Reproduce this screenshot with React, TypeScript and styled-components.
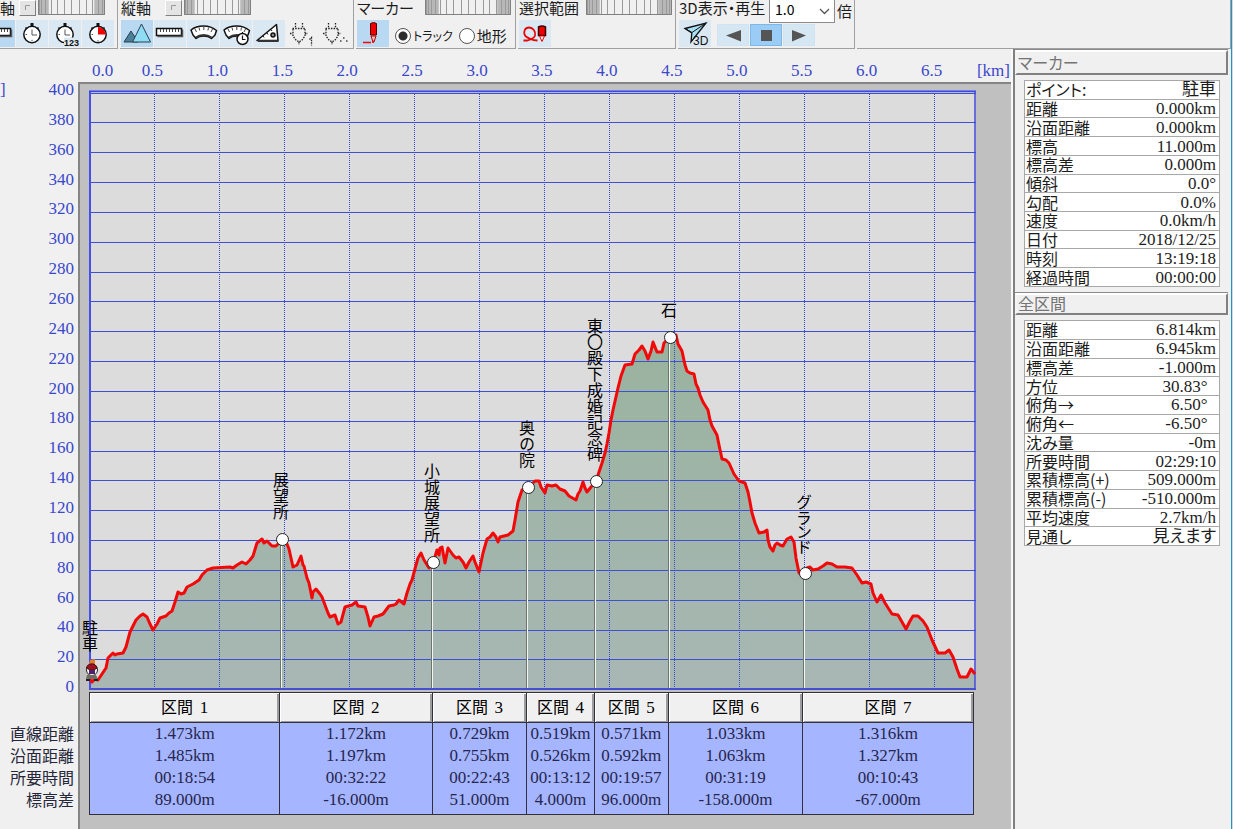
import React from "react";
import styled, { createGlobalStyle } from "styled-components";

const UI_FONT = `"Noto Sans CJK JP", "Liberation Sans", sans-serif`;
const NUM_FONT = `"Liberation Serif", "Noto Sans CJK JP", serif`;
const BLUE = "#3a48cc";

const GlobalStyle = createGlobalStyle`
  *, *::before, *::after { box-sizing: border-box; }
  html, body { margin: 0; background: #f0f0f0; }
  body { font-family: ${UI_FONT}; font-size: 16px; font-feature-settings: "palt"; color: #1c1c1c; overflow-x: hidden; }
  button, select, input { font: inherit; margin: 0; padding: 0; }
`;

const Desktop = styled.div`
  min-height: 100vh;
  display: flex;
  padding-right: 1px;
  background: #cfdbe3;
`;

const Window = styled.div`
  flex: 1;
  min-width: 0;
  display: flex;
  flex-direction: column;
  background: #f0f0f0;
  border-right: 1px solid #2a8fbd;
`;

/* ---------- toolbar ---------- */

const Toolbar = styled.header`
  display: flex;
  gap: 2px;
  height: 49px;
  overflow: hidden;
`;

const Group = styled.section<{ $w?: number }>`
  flex: ${(p) => (p.$w ? `0 0 ${p.$w}px` : "1 1 0")};
  border-right: 1px solid #a0a0a0;
  border-bottom: 1px solid #a0a0a0;
  overflow: hidden;
`;

const TopRow = styled.div<{ $end?: boolean }>`
  display: flex;
  justify-content: ${(p) => (p.$end ? "flex-end" : "flex-start")};
  align-items: flex-start;
  gap: 2px;
  height: 20px;
  padding: 0 ${(p) => (p.$end ? 12 : 1)}px 0 ${(p) => (p.$end ? 0 : 1)}px;
`;

const Caption = styled.span<{ $w?: number }>`
  min-width: ${(p) => p.$w || 0}px;
  font-size: 15px;
  line-height: 15px;
  white-space: nowrap;
`;

const Unit = styled.span`
  font-size: 15px;
  line-height: 22px;
`;

const ToolRow = styled.div<{ $end?: boolean }>`
  display: flex;
  justify-content: ${(p) => (p.$end ? "flex-end" : "flex-start")};
  align-items: center;
  gap: 1px;
  height: 27px;
  padding: 0 ${(p) => (p.$end ? 3 : 0)}px 0 1px;
`;

const ToolButton = styled.button<{ $on?: boolean }>`
  flex: none;
  width: 32px;
  height: 27px;
  border: 0;
  background: ${(p) => (p.$on ? "#b9d9f3" : "#dae8f4")};
  &:disabled { background: transparent; }
  svg { display: block; }
`;

const Player = styled.div`
  display: flex;
  gap: 1px;
  margin: 3px 0 0 5px;
`;

const PlayButton = styled.button<{ $on?: boolean }>`
  width: 32px;
  height: 22px;
  border: 1px solid ${(p) => (p.$on ? "#7db8e8" : "#cfe3f3")};
  background: ${(p) => (p.$on ? "#9accf5" : "#d6e7f4")};
  svg { display: block; }
`;

const ResetButton = styled.button`
  width: 17px;
  height: 16px;
  border: 1px solid;
  border-color: #ffffff #808080 #808080 #ffffff;
  background: #e4e4e4;
  svg { display: block; }
`;

const WheelButton = styled.button<{ $w: number }>`
  width: ${(p) => p.$w}px;
  height: 15px;
  border: 0;
  svg { display: block; }
`;

const SpeedBox = styled.div`
  position: relative;
  width: 66px;
  svg { position: absolute; right: 5px; top: 8px; pointer-events: none; }
`;

const SpeedSelect = styled.select`
  display: block;
  appearance: none;
  width: 100%;
  height: 23px;
  padding: 0 0 4px 5px;
  border: 1px solid #8c8c8c;
  border-top: 0;
  border-radius: 0;
  background: #ffffff;
  font-size: 14px;
  line-height: 18px;
`;

const RadioLabel = styled.label`
  display: flex;
  align-items: center;
  gap: 2px;
  margin: 4px 0 0 5px;
  font-size: 15px;
  line-height: 20px;
  white-space: nowrap;
`;

const KanaText = styled.span`
  font-size: 12px;
`;

const Radio = styled.input`
  appearance: none;
  width: 16px;
  height: 16px;
  border: 1px solid #555555;
  border-radius: 50%;
  background: #ffffff;
  &:checked { background: radial-gradient(circle, #2c2c2c 0 4px, #ffffff 5px); }
`;

/* ---------- main area ---------- */

const Main = styled.main`
  flex: 1;
  display: flex;
`;

const ChartPane = styled.div`
  flex: 1;
  min-width: 0;
  display: flex;
  flex-direction: column;
  border-right: 2px solid #f8f8f8;
`;

const XAxis = styled.div`
  display: flex;
  height: 33px;
  padding: 10px 1px 0 92px;
  color: ${BLUE};
  font-family: ${NUM_FONT};
  font-size: 17px;
  line-height: 24px;
`;

const FirstTick = styled.span`
  flex: 0 0 28px;
`;

const Tick = styled.span`
  flex: 1;
  text-align: center;
`;

const AxisUnit = styled.span`
  flex: 0 0 46px;
  text-align: right;
`;

const ChartBody = styled.div`
  flex: 1;
  background:
    linear-gradient(#858585, #858585) 78px 0 / 100% 2px no-repeat,
    linear-gradient(to right, #f0f0f0 78px, #858585 78px 80px, #c0c0c0 80px);
`;

const PlotRow = styled.div`
  display: flex;
  align-items: flex-start;
  height: 610px;
`;

const YAxis = styled.div`
  flex: 0 0 78px;
  display: flex;
  flex-direction: column;
  height: 627px;
  margin-top: -7px;
  padding-right: 4px;
  color: ${BLUE};
  font-family: ${NUM_FONT};
  font-size: 17px;
`;

const YTick = styled.span`
  flex: 1;
  display: flex;
  align-items: center;
  justify-content: flex-end;
`;

const YUnit = styled.span`
  margin-right: auto;
`;

const Plot = styled.div`
  position: relative;
  flex: 1;
  height: 600px;
  margin: 8px 35px 0 11px;
`;

const PlotSvg = styled.svg`
  display: block;
  width: 100%;
  height: 100%;
`;

const Pin = styled.div`
  position: absolute;
  width: 13px;
  height: 13px;
  margin: -7px 0 0 -6px;
`;

const PinDot = styled.span`
  display: block;
  width: 13px;
  height: 13px;
  border: 1px solid #222222;
  border-radius: 50%;
  background: #ffffff;
`;

const PinLabel = styled.span<{ $tight?: boolean }>`
  position: absolute;
  bottom: 26px;
  left: -3px;
  writing-mode: vertical-rl;
  font-feature-settings: "vpal" ${(p) => (p.$tight ? 1 : 0)};
  font-size: 16px;
  line-height: 16px;
  white-space: nowrap;
  color: #000000;
`;

const Hiker = styled.svg`
  position: absolute;
  left: -1px;
  top: -7px;
`;

/* ---------- section table ---------- */

const SectionTable = styled.table`
  display: grid;
  grid-template-columns: 89px 1473fr 1172fr 729fr 519fr 571fr 1033fr 1316fr;
  margin-right: 37px;
  font-family: ${NUM_FONT};
  font-size: 17px;
  line-height: 22px;
  color: #26264e;
  thead, tbody, tr { display: contents; }
`;

const Corner = styled.td`
  padding: 0;
`;

const SectionHead = styled.th`
  min-width: 0;
  height: 31px;
  padding: 0;
  border: 1px solid #33303c;
  border-left-width: 0;
  box-shadow: inset 1px 1px 0 #ffffff, inset -2px -1px 0 #9c9c9c;
  background: #f0f0f0;
  color: #000000;
  font-family: ${UI_FONT};
  font-size: 16px;
  font-weight: 400;
  line-height: 26px;
  &:nth-child(2) { border-left-width: 1px; }
`;

const SectionNum = styled.span`
  margin-left: 3px;
  font-family: ${NUM_FONT};
  font-size: 17px;
`;

const RowHead = styled.th`
  padding: 0 15px 0 0;
  color: #26263a;
  font-family: ${UI_FONT};
  font-size: 16px;
  font-weight: 400;
  line-height: 20px;
  text-align: right;
  white-space: nowrap;
`;

const SectionCell = styled.td<{ $last?: boolean }>`
  min-width: 0;
  padding: 0 0 ${(p) => (p.$last ? 3 : 0)}px;
  border-right: 1px solid #33303c;
  border-bottom: ${(p) => (p.$last ? "1px solid #33303c" : "0")};
  background: #a5b5ff;
  text-align: center;
  white-space: nowrap;
  &:nth-child(2) { border-left: 1px solid #33303c; }
`;

/* ---------- sidebar ---------- */

const Sidebar = styled.aside`
  flex: 0 0 218px;
  padding: 1px 3px 0 0;
  border-left: 2px solid #808080;
`;

const PanelTitle = styled.h2<{ $h: number }>`
  height: ${(p) => p.$h}px;
  margin: 0;
  padding-left: 1px;
  border: 2px solid;
  border-color: #ffffff #808080 #808080 #f4f4f4;
  box-shadow: 0 -1px 0 #8a8a8a;
  color: #747474;
  font-size: 16px;
  font-weight: 400;
  line-height: ${(p) => p.$h - 5}px;
`;

const InfoTable = styled.table<{ $h: number }>`
  width: calc(100% - 17px);
  height: ${(p) => p.$h}px;
  margin: 5px 8px 6px 9px;
  border-collapse: collapse;
  background: #ffffff;
  tr { border: 1px solid #a8a8a8; }
  th, td { padding: 0 3px 0 1px; line-height: 17px; white-space: nowrap; }
  th { font-size: 16px; font-weight: 400; text-align: left; }
  td { font-family: ${NUM_FONT}; font-size: 17px; text-align: right; }
`;

/* ---------- data ---------- */

const PROFILE: [number, number][] = [
  [89, 678], [92, 682], [95, 679], [98, 680], [102, 674], [106, 668], [108, 658], [113, 653], [115, 655], [117, 654], [123, 653], [126, 647],
  [130, 632], [132, 628], [136, 620], [140, 616], [143, 614], [147, 617], [150, 624], [153, 630], [157, 624], [160, 618], [166, 616], [169, 613], [172, 611],
  [175, 602], [178, 592], [181, 594], [184, 593], [187, 587], [193, 584], [199, 580], [202, 575], [207, 570], [213, 568],
  [230, 567], [233, 568], [237, 565], [242, 562], [246, 564], [250, 560], [253, 556], [257, 543], [262, 539], [264, 543], [267, 541], [272, 546], [276, 546],
  [279, 543], [282, 540], [287, 544], [289, 549], [293, 567], [297, 565], [301, 556], [303, 565], [304, 566], [307, 578], [309, 583], [312, 598],
  [313, 592], [316, 589], [320, 594], [322, 597], [325, 605], [328, 613], [330, 617], [335, 615], [338, 624], [341, 622], [345, 607],
  [352, 605], [356, 602], [358, 606], [365, 607], [368, 617], [370, 626], [374, 617], [378, 616], [383, 614], [389, 606], [394, 605], [396, 604], [399, 600],
  [404, 604], [407, 593], [410, 584], [412, 580], [416, 565], [418, 558], [421, 553], [424, 560], [429, 568], [433, 563], [437, 550], [439, 555],
  [440, 548], [442, 547], [445, 563], [448, 548], [453, 555], [456, 558], [459, 557], [463, 562], [466, 568], [469, 562], [473, 556], [475, 562], [479, 572],
  [483, 553], [487, 539], [490, 537], [493, 533], [496, 537], [498, 542], [500, 537], [508, 535], [513, 531], [515, 520], [518, 502], [522, 490],
  [528, 488], [532, 484], [535, 481], [539, 481], [541, 487], [545, 493], [547, 485], [552, 486], [556, 485], [560, 489], [565, 491], [569, 496],
  [576, 500], [578, 494], [580, 491], [583, 482], [585, 488], [587, 492], [591, 487], [596, 482], [599, 472], [602, 463], [605, 453], [607, 444], [609, 433], [611, 420], [613, 410],
  [618, 388], [621, 376], [625, 365], [632, 364], [635, 354], [639, 350], [642, 346], [645, 351], [648, 359], [651, 351], [653, 342], [657, 352], [662, 352],
  [664, 343], [669, 338], [676, 335], [678, 344], [682, 351], [685, 365], [687, 371], [690, 373], [694, 374], [696, 384], [698, 388], [700, 395], [703, 402], [708, 410],
  [710, 420], [712, 426], [717, 435], [719, 445], [722, 459], [726, 460], [729, 463], [734, 474], [739, 481], [745, 483], [748, 492], [750, 502], [752, 513], [755, 523],
  [759, 533], [764, 532], [767, 530], [768, 540], [770, 547], [773, 551], [775, 545], [777, 543], [780, 545], [783, 546], [787, 539], [791, 537], [794, 542],
  [796, 558], [799, 573], [805, 574], [807, 568], [810, 567], [813, 570], [818, 569], [823, 566], [827, 563], [832, 564], [837, 567], [845, 567], [852, 568], [857, 575],
  [862, 583], [866, 582], [871, 584], [873, 593], [877, 602], [881, 595], [885, 603], [892, 614], [898, 615], [902, 622], [906, 629], [910, 621],
  [913, 616], [918, 616], [923, 621], [927, 627], [932, 640], [938, 653], [945, 653], [949, 650], [953, 657], [957, 669], [960, 677], [967, 677], [971, 669], [975, 674],
];

const PLOT = { x: 89, y: 90, w: 887, h: 600 };
const KM = 130;

const PINS = [
  { x: 282, y: 540, label: "展望所" },
  { x: 433, y: 563, label: "小城展望所" },
  { x: 528, y: 488, label: "奥の院" },
  { x: 596, y: 482, label: "東〇殿下成婚記念碑" },
  { x: 670, y: 338, label: "石" },
  { x: 805, y: 574, label: "グランド", tight: true },
];

const SECTIONS: [string, string[]][] = [
  ["直線距離", ["1.473km", "1.172km", "0.729km", "0.519km", "0.571km", "1.033km", "1.316km"]],
  ["沿面距離", ["1.485km", "1.197km", "0.755km", "0.526km", "0.592km", "1.063km", "1.327km"]],
  ["所要時間", ["00:18:54", "00:32:22", "00:22:43", "00:13:12", "00:19:57", "00:31:19", "00:10:43"]],
  ["標高差", ["89.000m", "-16.000m", "51.000m", "4.000m", "96.000m", "-158.000m", "-67.000m"]],
];

const MARKER_INFO = [
  ["ポイント:", "駐車"], ["距離", "0.000km"], ["沿面距離", "0.000km"], ["標高", "11.000m"],
  ["標高差", "0.000m"], ["傾斜", "0.0°"], ["勾配", "0.0%"], ["速度", "0.0km/h"],
  ["日付", "2018/12/25"], ["時刻", "13:19:18"], ["経過時間", "00:00:00"],
];

const TOTAL_INFO = [
  ["距離", "6.814km"], ["沿面距離", "6.945km"], ["標高差", "-1.000m"], ["方位", "30.83°\u00a0\u00a0"],
  ["俯角→", "6.50°\u00a0\u00a0"], ["俯角←", "-6.50°\u00a0\u00a0"], ["沈み量", "-0m"], ["所要時間", "02:29:10"],
  ["累積標高(+)", "509.000m"], ["累積標高(-)", "-510.000m"], ["平均速度", "2.7km/h"], ["見通し", "見えます"],
];

/* ---------- icons ---------- */

const Icon = ({ children }: { children: React.ReactNode }) => (
  <svg width="32" height="27" viewBox="0 0 32 27" fill="none" stroke="#111" strokeWidth="1.5">{children}</svg>
);

const ClockFace = ({ pie }: { pie?: boolean }) => (
  <>
    <circle cx="16" cy="14.5" r="8.2" fill="#fff" />
    {pie && <path d="M16 14.5V7a7.5 7.5 0 0 1 7.5 7.5z" fill="#f00000" stroke="none" />}
    <path d="M14.5 4.5h3" strokeWidth="3" />
    <path d="M9.5 7.5l1.5 1.5M22.5 7.5L21 9" />
    <path d={pie ? "M16 20v1.5M9.5 14.5H11" : "M16 9.5v5.5h5M9.5 14.5H11M16 19.8v1.2"} stroke="#555" strokeWidth="1" />
  </>
);

const RulerIcon = () => (
  <Icon>
    <path d="M2.500 8.500h25v7h-25z" fill="#fff" />
    <path d="M3.500 16.500h25V9.500" stroke="#555" />
    <path d="M6.500 9v3M9.500 9v3M12.500 9v3M15.500 9v3M18.500 9v3M21.500 9v3M24.500 9v3" strokeWidth="1" stroke="#444" />
  </Icon>
);

const ArcShape = () => (
  <>
    <path d="M4 10C7 7.500 11 6 16.500 6S26 7.500 29.500 10.500L28 15l-3.500 3.500C20 15 13 15 9 18.500L6 15z" fill="#fff" strokeLinejoin="round" />
    <path d="M9 17.500C13 14 20 14 24.500 17.500" stroke="#333" strokeWidth="2" />
    <path d="M8 9l1.500 3M12 7.500l.7 3M16.800 7v3M21.500 7.500l-.6 3M25.500 9L24 12" strokeWidth="1" stroke="#444" />
  </>
);

const PlugShape = () => (
  <g strokeDasharray="1.500 1.200" strokeWidth="1.300" stroke="#222">
    <path d="M9.500 3v5M16.500 3v5M6.500 8.500h13M7 9v7l3 4 3 2 3-2 3-4V9M4 13.500h3M19 13.500h3M13 22v3" />
  </g>
);

const Wheel = ({ w, label }: { w: number; label: string }) => {
  const n = Math.round(w / 4.7);
  const lines = Array.from({ length: n - 1 }, (_, i) => (w / 2) * (1 - Math.cos((Math.PI * (i + 1)) / n)));
  return (
    <WheelButton $w={w} type="button" aria-label={label}>
      <svg width={w} height="15" viewBox={`0 0 ${w} 15`} preserveAspectRatio="none">
        <rect width={w} height="15" fill="#f0f0f0" />
        <rect width={w * 0.16} height="15" fill="#b8b8b8" />
        <rect x={w * 0.84} width={w * 0.16} height="15" fill="#b8b8b8" />
        {lines.map((x) => <path key={x} d={`M${Math.round(x) + 0.5} 0V15`} stroke="#9a9a9a" strokeWidth="1" />)}
        <path d={`M.5 0V14.500H${w - 0.5}V0`} fill="none" stroke="#808080" />
      </svg>
    </WheelButton>
  );
};

const Reset = ({ label }: { label: string }) => (
  <ResetButton type="button" aria-label={label}>
    <svg width="15" height="14" viewBox="0 0 15 14"><path d="M5.500 9V4.500H10" fill="none" stroke="#999" /></svg>
  </ResetButton>
);

/* ---------- parts ---------- */

const ToolbarView = () => (
  <Toolbar>
    <Group $w={118}>
      <TopRow $end>
        <Caption $w={17}>軸</Caption>
        <Reset label="横軸リセット" />
        <Wheel w={67} label="横軸" />
      </TopRow>
      <ToolRow $end>
        <ToolButton $on aria-label="距離"><RulerIcon /></ToolButton>
        <ToolButton aria-label="時間"><Icon><ClockFace /></Icon></ToolButton>
        <ToolButton aria-label="時刻">
          <Icon>
            <ClockFace />
            <path d="M15 17.500h17V27H15z" fill="#dae8f4" stroke="none" />
            <text x="15" y="26" fontSize="9" fontWeight="700" fontFamily="Liberation Sans" fill="#111" stroke="none">123</text>
          </Icon>
        </ToolButton>
        <ToolButton aria-label="経過"><Icon><ClockFace pie /></Icon></ToolButton>
      </ToolRow>
    </Group>

    <Group $w={234}>
      <TopRow>
        <Caption $w={42}>縦軸</Caption>
        <Reset label="縦軸リセット" />
        <Wheel w={67} label="縦軸" />
      </TopRow>
      <ToolRow>
        <ToolButton $on aria-label="標高">
          <Icon>
            <path d="M3 22l7-11 7 11z" fill="#4d7f99" stroke="#26404d" strokeWidth="1" />
            <path d="M11.500 22L20.500 4l9 18z" fill="#8fdcf5" stroke="#26404d" strokeWidth="1" />
          </Icon>
        </ToolButton>
        <ToolButton aria-label="沿面距離"><RulerIcon /></ToolButton>
        <ToolButton aria-label="速度"><Icon><ArcShape /></Icon></ToolButton>
        <ToolButton aria-label="平均速度">
          <Icon>
            <ArcShape />
            <circle cx="22.500" cy="19" r="5.500" fill="#fff" />
            <path d="M22.500 15.500v4h3M22.500 12v2" strokeWidth="1.200" />
          </Icon>
        </ToolButton>
        <ToolButton aria-label="傾斜">
          <Icon>
            <path d="M4 20.500L23.500 4.500l1.500 16z" fill="#fff" strokeLinejoin="round" />
            <path d="M5 21h20.500" stroke="#333" strokeWidth="2" />
            <circle cx="20" cy="15" r="2" fill="#888" />
            <path d="M10 16l1 1.500M14 13l1 1.500M18 9.500l1 1.500" strokeWidth="1" />
          </Icon>
        </ToolButton>
        <ToolButton disabled aria-label="センサー1">
          <Icon>
            <PlugShape />
            <path d="M23.500 19.500l2-2v8" stroke="#222" strokeWidth="1.300" strokeDasharray="1.500 1" />
          </Icon>
        </ToolButton>
        <ToolButton disabled aria-label="センサー">
          <Icon>
            <PlugShape />
            <path d="M21 21h1.500M24 18h1.500M27 21h1.500" stroke="#444" />
          </Icon>
        </ToolButton>
      </ToolRow>
    </Group>

    <Group $w={160}>
      <TopRow>
        <Caption $w={66}>マーカー</Caption>
        <Wheel w={86} label="マーカー" />
      </TopRow>
      <ToolRow>
        <ToolButton $on aria-label="マーカー表示">
          <Icon>
            <path d="M13.500 3.500q3-2 6 0v11.500h-6z" fill="#f00000" stroke="#5a0000" strokeWidth="1" />
            <path d="M14 16h5l-2 6h-1z" fill="#ffc0b0" stroke="#a00" strokeWidth="1" />
            <path d="M6 22.500h8M16 20.500v2.500" stroke="#f00" />
          </Icon>
        </ToolButton>
        <RadioLabel><Radio type="radio" name="marker" defaultChecked /><KanaText>トラック</KanaText></RadioLabel>
        <RadioLabel><Radio type="radio" name="marker" />地形</RadioLabel>
      </ToolRow>
    </Group>

    <Group $w={158}>
      <TopRow>
        <Caption $w={65}>選択範囲</Caption>
        <Wheel w={86} label="選択範囲" />
      </TopRow>
      <ToolRow>
        <ToolButton aria-label="範囲選択">
          <Icon>
            <path d="M4.500 20.500h4c4-1 6.500-2 7.500-5 1-4-2-8-6-8s-5.500 4-4.500 7 4 3.500 6 4.500 3 1.500 7 1.500" stroke="#e80000" strokeWidth="1.800" />
            <path d="M19.500 7q3.500-2 7 0v8.500h-7z" fill="#f00000" stroke="#3a0000" />
            <path d="M20.500 16h5l-2.500 5.500z" fill="#fff" stroke="#e00" strokeWidth="1" />
          </Icon>
        </ToolButton>
      </ToolRow>
    </Group>

    <Group $w={177}>
      <TopRow>
        <Caption $w={88}>3D表示・再生</Caption>
        <SpeedBox>
          <SpeedSelect aria-label="再生速度" defaultValue="1.0"><option>1.0</option><option>2.0</option></SpeedSelect>
          <svg width="11" height="7" viewBox="0 0 11 7"><path d="M1 1l4.500 4.500L10 1" fill="none" stroke="#555" strokeWidth="1.300" /></svg>
        </SpeedBox>
        <Unit>倍</Unit>
      </TopRow>
      <ToolRow>
        <ToolButton aria-label="3D表示">
          <Icon>
            <path d="M6 8.500L27 3 12 22l.8-9z" fill="#a9e0f5" strokeWidth="1.300" />
            <path d="M6 8.500l7 4L27 3" strokeWidth="1" />
            <text x="14" y="25" fontSize="12" fontFamily="Liberation Sans" fill="#111" stroke="none">3D</text>
          </Icon>
        </ToolButton>
        <Player>
          <PlayButton aria-label="逆再生"><svg width="30" height="20" viewBox="0 0 30 20"><path d="M8 10.500L23 5v11.500z" fill="#555" /></svg></PlayButton>
          <PlayButton $on aria-label="停止"><svg width="30" height="20" viewBox="0 0 30 20"><path d="M10 5h11v11H10z" fill="#555" /></svg></PlayButton>
          <PlayButton aria-label="再生"><svg width="30" height="20" viewBox="0 0 30 20"><path d="M8 5l14 5.500-14 6z" fill="#555" /></svg></PlayButton>
        </Player>
      </ToolRow>
    </Group>
    <Group />
  </Toolbar>
);

const left = (x: number) => `${((x - PLOT.x) / PLOT.w) * 100}%`;

const ElevationPlot = () => {
  const line = PROFILE.map(([x, y]) => `${x},${y}`).join(" ");
  const rows = Array.from({ length: 20 }, (_, i) => Math.round(689.2 - (i + 1) * 29.83));
  const cols = Array.from({ length: 14 }, (_, i) => PLOT.x + i * (KM / 2));
  return (
    <Plot>
      <PlotSvg viewBox={`${PLOT.x} ${PLOT.y} ${PLOT.w} ${PLOT.h}`} preserveAspectRatio="none" role="img" aria-label="標高グラフ">
        <defs>
          <linearGradient id="ground" gradientUnits="userSpaceOnUse" x1="0" y1="335" x2="0" y2="690">
            <stop offset="0" stopColor="#99b39e" />
            <stop offset="1" stopColor="#a8b7b4" />
          </linearGradient>
        </defs>
        <rect x={PLOT.x} y={PLOT.y} width={PLOT.w} height={PLOT.h} fill="#dcdcdc" />
        <polygon points={`89,690 ${line} 975,690`} fill="url(#ground)" />
        {rows.map((y) => <path key={y} d={`M89 ${y + 0.5}H976`} stroke="#3f50d4" />)}
        {cols.map((x) => <path key={x} d={`M${x + 0.5} 94V690`} stroke="#3a48d8" strokeDasharray="1 1" />)}
        {PINS.map((p) => (
          <g key={p.x}>
            <path d={`M${p.x - 1.5} ${p.y}V688`} stroke="#6c746e" />
            <path d={`M${p.x - 0.5} ${p.y}V688`} stroke="#f4f6f2" />
          </g>
        ))}
        <path d="M90 91V688" stroke="#4450ee" strokeWidth="2" />
        <path d="M89 90.500H976" stroke="#8890ee" />
        <path d="M89 91.500H976M975 91V688" stroke="#4048d8" strokeWidth="1.500" />
        <path d="M89 689H976" stroke="#4450d0" strokeWidth="2" />
        <polyline points={line} fill="none" stroke="#f20808" strokeWidth="3" strokeLinejoin="round" vectorEffect="non-scaling-stroke" />
      </PlotSvg>
      {PINS.map((p) => (
        <Pin key={p.label} style={{ left: left(p.x), top: p.y - PLOT.y }}>
          <PinLabel $tight={p.tight}>{p.label}</PinLabel>
          <PinDot />
        </Pin>
      ))}
      <Pin style={{ left: left(91), top: 582 }}>
        <PinLabel>駐車</PinLabel>
        <Hiker width="16" height="24" viewBox="0 0 16 24">
          <path d="M5 6l1-4 5-1v6z" fill="#e08030" />
          <circle cx="8" cy="12" r="5.500" fill="#fff" stroke="#222" />
          <path d="M2.500 10C3 5 12 4 13 10l-3 2H6z" fill="#a01020" stroke="#401010" />
          <path d="M5 12h6v4H5z" fill="#50206a" />
          <path d="M3 17h9l2 4H2z" fill="#6d6d66" />
          <path d="M2 21h4v2H2zM10 21h4v2h-4z" fill="#222" />
        </Hiker>
      </Pin>
    </Plot>
  );
};

const Info = ({ title, rows, titleHeight, height }: { title: string; rows: string[][]; titleHeight: number; height: number }) => (
  <section>
    <PanelTitle $h={titleHeight}>{title}</PanelTitle>
    <InfoTable $h={height}>
      <tbody>
        {rows.map(([k, v]) => <tr key={k}><th scope="row">{k}</th><td>{v}</td></tr>)}
      </tbody>
    </InfoTable>
  </section>
);

export default function App() {
  return (
    <>
      <GlobalStyle />
      <Desktop>
        <Window>
          <ToolbarView />
          <Main>
            <ChartPane>
              <XAxis>
                <FirstTick>0.0</FirstTick>
                {Array.from({ length: 13 }, (_, i) => <Tick key={i}>{((i + 1) / 2).toFixed(1)}</Tick>)}
                <AxisUnit>[km]</AxisUnit>
              </XAxis>
              <ChartBody>
                <PlotRow>
                  <YAxis>
                    {Array.from({ length: 21 }, (_, i) => (
                      <YTick key={i}>{i === 0 && <YUnit>]</YUnit>}{400 - i * 20}</YTick>
                    ))}
                  </YAxis>
                  <ElevationPlot />
                </PlotRow>
                <SectionTable>
                  <thead>
                    <tr>
                      <Corner />
                      {[1, 2, 3, 4, 5, 6, 7].map((n) => (
                        <SectionHead key={n} scope="col">区間 <SectionNum>{n}</SectionNum></SectionHead>
                      ))}
                    </tr>
                  </thead>
                  <tbody>
                    {SECTIONS.map(([name, cells], r) => (
                      <tr key={name}>
                        <RowHead scope="row">{name}</RowHead>
                        {cells.map((c, i) => <SectionCell key={i} $last={r === SECTIONS.length - 1}>{c}</SectionCell>)}
                      </tr>
                    ))}
                  </tbody>
                </SectionTable>
              </ChartBody>
            </ChartPane>
            <Sidebar>
              <Info title="マーカー" rows={MARKER_INFO} titleHeight={25} height={207} />
              <Info title="全区間" rows={TOTAL_INFO} titleHeight={22} height={226} />
            </Sidebar>
          </Main>
        </Window>
      </Desktop>
    </>
  );
}
